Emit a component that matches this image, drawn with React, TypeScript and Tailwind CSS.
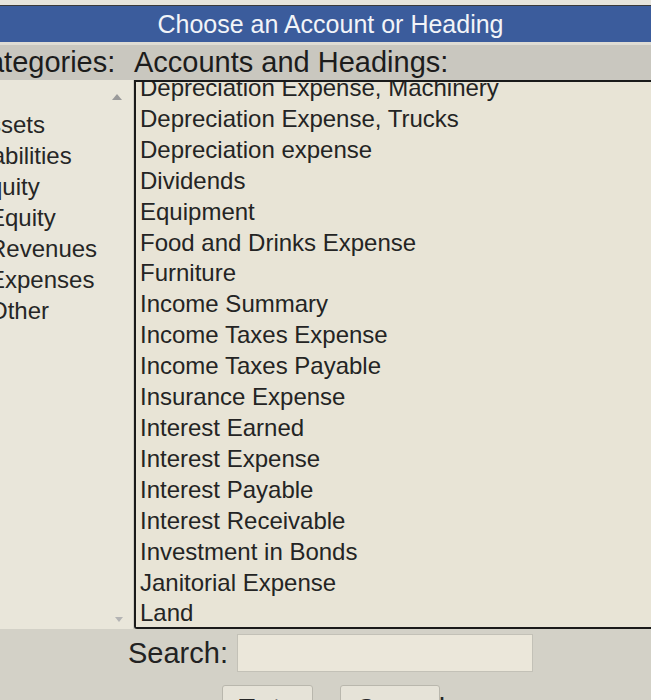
const categories: { label: string; indent: boolean }[] = [
  { label: "Assets", indent: false },
  { label: "Liabilities", indent: false },
  { label: "Equity", indent: false },
  { label: "Equity", indent: true },
  { label: "Revenues", indent: true },
  { label: "Expenses", indent: true },
  { label: "Other", indent: true },
];

const accounts = [
  "Depreciation Expense, Machinery",
  "Depreciation Expense, Trucks",
  "Depreciation expense",
  "Dividends",
  "Equipment",
  "Food and Drinks Expense",
  "Furniture",
  "Income Summary",
  "Income Taxes Expense",
  "Income Taxes Payable",
  "Insurance Expense",
  "Interest Earned",
  "Interest Expense",
  "Interest Payable",
  "Interest Receivable",
  "Investment in Bonds",
  "Janitorial Expense",
  "Land",
];

export default function App() {
  return (
    <div
      className="h-[700px] w-[651px] overflow-hidden bg-[#d3d1c7] text-[#262626]"
      style={{ fontFamily: '"Liberation Sans", Arial, sans-serif' }}
    >
      {/* ── Title bar ─────────────────────────────────────── */}
      <div className="h-[5px] bg-[#e6e4dc]" />
      <div className="h-[1px] bg-[#3a3a3a]" />
      <div className="flex h-[36px] items-center justify-center pl-[10px] bg-[#3b5c9c] text-[25px] leading-none text-[#f2f4f8]">
        Choose an Account or Heading
      </div>
      <div className="h-[3px] bg-[#dedcd4]" />

      {/* ── Column headers ────────────────────────────────── */}
      <div className="flex h-[35px] items-center whitespace-nowrap bg-[#c9c7bf] text-[29px] leading-none text-[#1c1c1c]">
        <span className="ml-[-33px] w-[167px] shrink-0">Categories:</span>
        <span>Accounts and Headings:</span>
      </div>

      {/* ── Lists ─────────────────────────────────────────── */}
      <div className="flex h-[549px]">
        <div className="relative w-[134px] shrink-0 overflow-hidden border-r border-[#cfcdc4] bg-[#e9e6da] pt-[29px]">
          <span className="absolute left-[112px] top-[14px] h-0 w-0 border-x-[5px] border-b-[6px] border-x-transparent border-b-[#9a9a9a]" />
          {categories.map((c, i) => (
            <div
              key={i}
              className={`whitespace-nowrap text-[24px] leading-[31px] ${c.indent ? "ml-[-11px]" : "ml-[-27px]"}`}
            >
              {c.label}
            </div>
          ))}
          <span className="absolute left-[115px] top-[537px] h-0 w-0 border-x-[4px] border-t-[5px] border-x-transparent border-t-[#b4b4b4]" />
        </div>
        <div className="flex-1 overflow-hidden rounded-bl-[3px] border-b-2 border-l-2 border-t-2 border-[#1a1a1a] bg-[#e8e4d6] pl-[4px]">
          <div className="mt-[-9px]">
            {accounts.map((a) => (
              <div key={a} className="whitespace-nowrap text-[24px] leading-[30.9px] text-[#242424]">
                {a}
              </div>
            ))}
          </div>
        </div>
      </div>

      {/* ── Search ────────────────────────────────────────── */}
      <div className="flex items-center pt-[5px]">
        <span className="ml-[128px] w-[109px] text-[29px] leading-none text-[#222]">Search:</span>
        <div className="h-[38px] w-[296px] border border-[#c3c1b7] bg-[#ebe7da]" />
      </div>

      {/* ── Buttons ───────────────────────────────────────── */}
      <div className="mt-[13px] flex gap-[27px] pl-[222px]">
        <div className="h-[40px] w-[91px] rounded-[3px] border border-[#b9b7ad] bg-[#e6e3d8] pt-[9px] pl-[14px] text-[29px] leading-none">
          Enter
        </div>
        <div className="h-[40px] w-[100px] rounded-[3px] border border-[#b9b7ad] bg-[#e6e3d8] pt-[9px] pl-[14px] text-[29px] leading-none">
          Cancel
        </div>
      </div>
    </div>
  );
}
